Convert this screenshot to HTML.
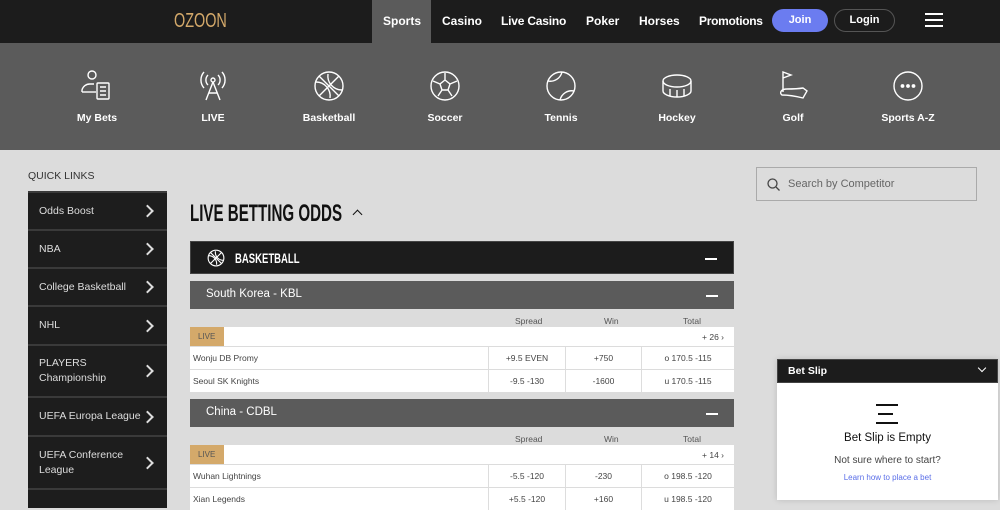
<!DOCTYPE html>
<html><head><meta charset="utf-8"><style>
*{margin:0;padding:0;box-sizing:border-box}
body{width:1000px;height:500px;overflow:hidden;background:#dcdcdc;font-family:"Liberation Sans",sans-serif;position:relative}
.a{position:absolute}
.top{left:0;top:0;width:1000px;height:43px;background:#1c1c1c}
.nav{color:#fff;font-weight:bold;font-size:12px;top:14px}
.sub{left:0;top:43px;width:1000px;height:107px;background:#5b5b5b}
.ic{width:116px;text-align:center;top:70px}
.ic svg{display:block;margin:0 auto}
.ic div{color:#fff;font-weight:bold;font-size:10.5px;margin-top:10px}
.ql{left:28px;width:139px;background:#1d1d1d;border-top:2px solid #3a3a3a;color:#ddd;font-size:10.5px;padding-left:11px;display:flex;align-items:center;line-height:15px}
.ql::after{content:"";position:absolute;right:15px;top:50%;width:7px;height:7px;border-right:2px solid #ddd;border-top:2px solid #ddd;transform:translateY(-50%) rotate(45deg)}
.ql.n::after{display:none}
.bar{left:190px;width:544px}
.minus{position:absolute;right:16px;top:50%;width:12px;height:2px;background:#fff}
.row{left:190px;width:544px;background:#fff;height:22px;font-size:8.5px;color:#444}
.cell{position:absolute;top:0;height:22px;line-height:22px;text-align:center;border-left:1px solid #ddd}
</style></head><body>
<div class="a top"></div>
<div class="a" style="left:174px;top:10px;color:#d4a96a;font-size:20px;transform:scaleX(.72);transform-origin:left">OZOON</div>
<div class="a" style="left:372px;top:0;width:59px;height:43px;background:#5b5b5b"></div>
<div class="a nav" style="left:383px">Sports</div>
<div class="a nav" style="left:442px">Casino</div>
<div class="a nav" style="left:501px;letter-spacing:-.2px">Live Casino</div>
<div class="a nav" style="left:586px">Poker</div>
<div class="a nav" style="left:639px">Horses</div>
<div class="a nav" style="left:699px;letter-spacing:-.3px">Promotions</div>
<div class="a" style="left:772px;top:9px;width:56px;height:23px;border-radius:12px;background:#6b7cf0;color:#fff;font-weight:bold;font-size:11px;text-align:center;line-height:23px">Join</div>
<div class="a" style="left:834px;top:9px;width:61px;height:23px;border-radius:12px;border:1px solid #555;color:#fff;font-weight:bold;font-size:11px;text-align:center;line-height:21px">Login</div>
<div class="a" style="left:925px;top:13px;width:18px;height:14px;border-top:2px solid #fff;border-bottom:2px solid #fff"><div style="margin-top:4px;height:2px;background:#fff"></div></div>

<div class="a sub"></div>
<div class="a ic" style="left:39px"><svg width="32" height="32" viewBox="0 0 32 32" fill="none" stroke="#fff" stroke-width="1.4"><circle cx="11" cy="5" r="4"/><path d="M1 22v-2a8 8 0 0 1 8-6h4"/><path d="M1 22h14"/><rect x="16" y="13" width="12" height="16" rx="1"/><path d="M19 17h6M19 21h6M19 25h6"/></svg><div>My Bets</div></div>
<div class="a ic" style="left:155px"><svg width="32" height="32" viewBox="0 0 32 32" fill="none" stroke="#fff" stroke-width="1.4"><circle cx="16" cy="10" r="2"/><path d="M11 5a7 7 0 0 0 0 10M21 5a7 7 0 0 1 0 10M7 2a12 12 0 0 0 0 16M25 2a12 12 0 0 1 0 16M16 12l-7 18M16 12l7 18M12 23h8"/></svg><div>LIVE</div></div>
<div class="a ic" style="left:271px"><svg width="32" height="32" viewBox="0 0 32 32" fill="none" stroke="#fff" stroke-width="1.4"><circle cx="16" cy="16" r="14"/><path d="M6 6l20 20M26 6L6 26M3 12a14 14 0 0 1 14 16M15 4a14 14 0 0 0 14 16"/></svg><div>Basketball</div></div>
<div class="a ic" style="left:387px"><svg width="32" height="32" viewBox="0 0 32 32" fill="none" stroke="#fff" stroke-width="1.4"><circle cx="16" cy="16" r="14"/><path d="M16 10l5 4-2 6h-6l-2-6zM16 10V3M21 14l7-3M19 20l4 6M13 20l-4 6M11 14l-7-3"/></svg><div>Soccer</div></div>
<div class="a ic" style="left:503px"><svg width="32" height="32" viewBox="0 0 32 32" fill="none" stroke="#fff" stroke-width="1.4"><circle cx="16" cy="16" r="14"/><path d="M3 11a12 12 0 0 0 14-9M15 30a12 12 0 0 1 14-9"/></svg><div>Tennis</div></div>
<div class="a ic" style="left:619px"><svg width="32" height="32" viewBox="0 0 32 32" fill="none" stroke="#fff" stroke-width="1.4"><ellipse cx="16" cy="11" rx="14" ry="6"/><path d="M2 11v10c0 3 6 6 14 6s14-3 14-6V11M9 19v7M16 20v7M23 19v7"/></svg><div>Hockey</div></div>
<div class="a ic" style="left:735px"><svg width="32" height="32" viewBox="0 0 32 32" fill="none" stroke="#fff" stroke-width="1.4"><path d="M6 22V2l8 3-8 3"/><path d="M10 19c-6 0-8 4-5 6 7 0 13 1 21 3l4-7-4-3c-6 1-10 1-16 1z"/></svg><div>Golf</div></div>
<div class="a ic" style="left:850px"><svg width="32" height="32" viewBox="0 0 32 32" fill="none" stroke="#fff" stroke-width="1.4"><circle cx="16" cy="16" r="14"/><circle cx="10.5" cy="16" r="1.2" fill="#fff"/><circle cx="16" cy="16" r="1.2" fill="#fff"/><circle cx="21.5" cy="16" r="1.2" fill="#fff"/></svg><div>Sports A-Z</div></div>

<div class="a" style="left:28px;top:170px;font-size:10.5px;color:#333">QUICK LINKS</div>
<div class="a ql" style="top:191px;height:38px">Odds Boost</div>
<div class="a ql" style="top:229px;height:38px">NBA</div>
<div class="a ql" style="top:267px;height:38px">College Basketball</div>
<div class="a ql" style="top:305px;height:39px">NHL</div>
<div class="a ql" style="top:344px;height:52px">PLAYERS<br>Championship</div>
<div class="a ql" style="top:396px;height:39px">UEFA Europa League</div>
<div class="a ql" style="top:435px;height:53px">UEFA Conference<br>League</div>
<div class="a ql n" style="top:488px;height:20px"></div>

<div class="a" style="left:190px;top:200px;font-size:24px;font-weight:bold;color:#111;transform:scaleX(.63);transform-origin:left">LIVE BETTING ODDS</div>
<div class="a" style="left:354px;top:211px;width:7px;height:7px;border-left:1.6px solid #111;border-top:1.6px solid #111;transform:rotate(45deg)"></div>

<div class="a bar" style="top:241px;height:33px;background:#1c1c1c;border:1px solid #444"><svg class="a" style="left:16px;top:7px" width="18" height="18" viewBox="0 0 32 32" fill="none" stroke="#fff" stroke-width="2"><circle cx="16" cy="16" r="14"/><path d="M6 6l20 20M26 6L6 26M3 12a14 14 0 0 1 14 16M15 4a14 14 0 0 0 14 16"/></svg><div class="a" style="left:44px;top:8px;color:#fff;font-weight:bold;font-size:14px;transform:scaleX(.68);transform-origin:left">BASKETBALL</div><div class="minus"></div></div>

<div class="a bar" style="top:281px;height:28px;background:#5b5b5b"><div class="a" style="left:16px;top:7px;color:#fff;font-size:11.5px">South Korea - KBL</div><div class="minus"></div></div>
<div class="a" style="left:515px;top:316px;font-size:8.5px;color:#555">Spread</div>
<div class="a" style="left:604px;top:316px;font-size:8.5px;color:#555">Win</div>
<div class="a" style="left:683px;top:316px;font-size:8.5px;color:#555">Total</div>
<div class="a row" style="top:327px;height:19px"><div class="a" style="left:0;top:0;width:34px;height:19px;background:#d4a96a;font-size:8px;color:#555;line-height:19px;padding-left:8px">LIVE</div><div class="a" style="right:10px;top:5px">+ 26 ›</div></div>
<div class="a row" style="top:347px"><span class="a" style="left:3px;top:6px">Wonju DB Promy</span><div class="cell" style="left:298px;width:77px">+9.5 EVEN</div><div class="cell" style="left:375px;width:76px">+750</div><div class="cell" style="left:451px;width:93px">o 170.5 -115</div></div>
<div class="a row" style="top:370px"><span class="a" style="left:3px;top:6px">Seoul SK Knights</span><div class="cell" style="left:298px;width:77px">-9.5 -130</div><div class="cell" style="left:375px;width:76px">-1600</div><div class="cell" style="left:451px;width:93px">u 170.5 -115</div></div>

<div class="a bar" style="top:399px;height:28px;background:#5b5b5b"><div class="a" style="left:16px;top:7px;color:#fff;font-size:11.5px">China - CDBL</div><div class="minus"></div></div>
<div class="a" style="left:515px;top:434px;font-size:8.5px;color:#555">Spread</div>
<div class="a" style="left:604px;top:434px;font-size:8.5px;color:#555">Win</div>
<div class="a" style="left:683px;top:434px;font-size:8.5px;color:#555">Total</div>
<div class="a row" style="top:445px;height:19px"><div class="a" style="left:0;top:0;width:34px;height:19px;background:#d4a96a;font-size:8px;color:#555;line-height:19px;padding-left:8px">LIVE</div><div class="a" style="right:10px;top:5px">+ 14 ›</div></div>
<div class="a row" style="top:465px"><span class="a" style="left:3px;top:6px">Wuhan Lightnings</span><div class="cell" style="left:298px;width:77px">-5.5 -120</div><div class="cell" style="left:375px;width:76px">-230</div><div class="cell" style="left:451px;width:93px">o 198.5 -120</div></div>
<div class="a row" style="top:488px"><span class="a" style="left:3px;top:6px">Xian Legends</span><div class="cell" style="left:298px;width:77px">+5.5 -120</div><div class="cell" style="left:375px;width:76px">+160</div><div class="cell" style="left:451px;width:93px">u 198.5 -120</div></div>

<div class="a" style="left:756px;top:167px;width:221px;height:34px;border:1px solid #aaa"><svg class="a" style="left:10px;top:10px" width="13" height="13" viewBox="0 0 13 13" fill="none" stroke="#444" stroke-width="1.3"><circle cx="5.5" cy="5.5" r="4.5"/><path d="M9 9l3.5 3.5"/></svg><div class="a" style="left:31px;top:10px;font-size:11px;color:#666">Search by Competitor</div></div>

<div class="a" style="left:777px;top:359px;width:221px;height:141px;background:#fff;box-shadow:0 0 6px rgba(0,0,0,.15)"></div>
<div class="a" style="left:777px;top:359px;width:221px;height:24px;background:#1c1c1c;border:1px solid #444"><div class="a" style="left:10px;top:5px;color:#fff;font-weight:bold;font-size:10.5px">Bet Slip</div><div class="a" style="right:12px;top:5px;width:6px;height:6px;border-right:1.6px solid #fff;border-bottom:1.6px solid #fff;transform:rotate(45deg)"></div></div>
<div class="a" style="left:876px;top:404px;width:22px;height:2px;background:#111"></div>
<div class="a" style="left:878px;top:413px;width:15px;height:2px;background:#111"></div>
<div class="a" style="left:876px;top:422px;width:22px;height:2px;background:#111"></div>
<div class="a" style="left:777px;top:432px;width:221px;text-align:center;font-size:11.5px;color:#111">Bet Slip is Empty</div>
<div class="a" style="left:777px;top:455px;width:221px;text-align:center;font-size:10px;color:#444">Not sure where to start?</div>
<div class="a" style="left:777px;top:473px;width:221px;text-align:center;font-size:8px;color:#5a6ee8">Learn how to place a bet</div>
</body></html>
